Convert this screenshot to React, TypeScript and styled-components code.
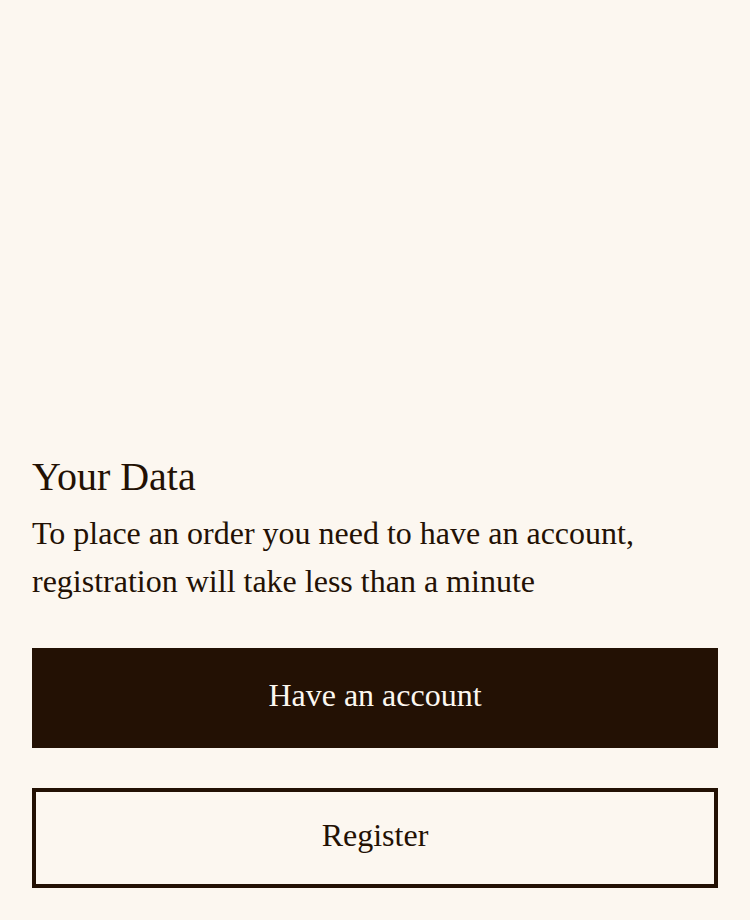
import React from "react";
import styled, { createGlobalStyle } from "styled-components";

const Global = createGlobalStyle`
  html, body { margin: 0; padding: 0; background: #fcf7f0; }
  * { box-sizing: border-box; }
`;

const Page = styled.div`
  min-height: 920px;
  display: flex;
  flex-direction: column;
  justify-content: flex-end;
  padding: 32px;
  background: #fcf7f0;
  color: #231104;
  font-family: "Liberation Serif", "Times New Roman", serif;
`;

const Title = styled.h1`
  margin: 0 0 9px;
  font-size: 40px;
  font-weight: 400;
  line-height: 46px;
`;

const Text = styled.p`
  margin: 0 0 43px;
  font-size: 32px;
  line-height: 48px;
`;

const Actions = styled.div`
  display: flex;
  flex-direction: column;
  gap: 40px;
`;

const Button = styled.button<{ $variant: "solid" | "outline" }>`
  height: 100px;
  width: 100%;
  padding: 0 0 6px;
  font-family: inherit;
  font-size: 32px;
  cursor: pointer;
  border: 4px solid #231104;
  background: ${(p) => (p.$variant === "solid" ? "#231104" : "transparent")};
  color: ${(p) => (p.$variant === "solid" ? "#fcf7f0" : "#231104")};
`;

export default function App() {
  return (
    <>
      <Global />
      <Page>
        <Title>Your Data</Title>
        <Text>
          To place an order you need to have an account,
          <br />
          registration will take less than a minute
        </Text>
        <Actions>
          <Button $variant="solid">Have an account</Button>
          <Button $variant="outline">Register</Button>
        </Actions>
      </Page>
    </>
  );
}
